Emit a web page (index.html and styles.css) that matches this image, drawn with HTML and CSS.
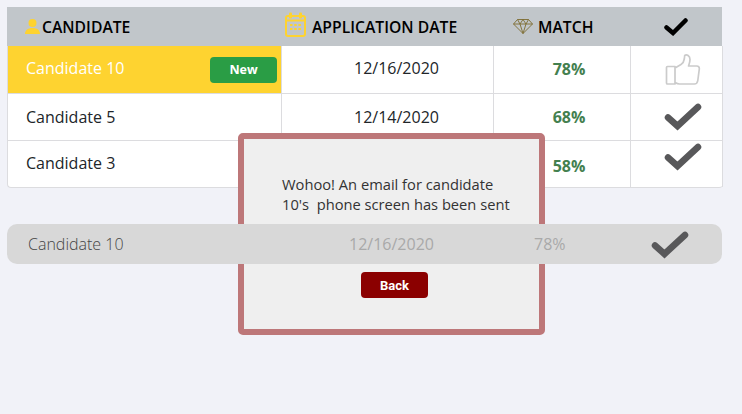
FILE: index.html
```html
<!DOCTYPE html>
<html lang="en">
<head>
<meta charset="utf-8">
<title>Candidates</title>
<link rel="stylesheet" href="styles.css">
</head>
<body>
<main class="page">
  <section class="table">
    <div class="head">
      <div class="hcell h1">
        <svg class="i-user" viewBox="0 0 15 15" width="15" height="15"><circle cx="7.5" cy="4" r="4" fill="#fed330"/><path d="M0 15c0-4 3-6 7.5-6S15 11 15 15z" fill="#fed330"/></svg>
        <span>CANDIDATE</span>
      </div>
      <div class="hcell h2">
        <svg class="i-cal" viewBox="0 0 21 25" width="21" height="25"><rect x="1" y="4" width="19" height="20" rx="2" fill="none" stroke="#fed330" stroke-width="2"/><path d="M1 8.5h19" stroke="#fed330" stroke-width="2"/><rect x="4" y="0.5" width="3" height="6" rx="1" fill="#fed330"/><rect x="14" y="0.5" width="3" height="6" rx="1" fill="#fed330"/><g fill="#fed330"><rect x="5" y="12" width="2.5" height="2"/><rect x="9.2" y="12" width="2.5" height="2"/><rect x="13.4" y="12" width="2.5" height="2"/><rect x="5" y="16" width="2.5" height="2"/><rect x="9.2" y="16" width="2.5" height="2"/><rect x="13.4" y="16" width="2.5" height="2"/></g></svg>
        <span>APPLICATION DATE</span>
      </div>
      <div class="hcell h3">
        <svg class="i-gem" viewBox="0 0 20 15" width="20" height="15"><path d="M4.5.5h11L19.5 5 10 14.500.5 5zM.5 5h19M4.500.5 7 5l3 9.500L13 5 15.500.5M7 5l3-4.500L13 5" fill="none" stroke="#7d6c30" stroke-width=".9"/></svg>
        <span>MATCH</span>
      </div>
      <div class="hcell h4">
        <svg viewBox="0 0 24 18" width="24" height="18"><path d="M2.500 9.500 9 15 21.500 2.500" fill="none" stroke="#000" stroke-width="4.500" stroke-linecap="round" stroke-linejoin="miter"/></svg>
      </div>
    </div>
    <div class="row r1">
      <div class="cell name hilite"><span class="lift">Candidate 10</span><span class="badge">New</span></div>
      <div class="cell date"><span class="lift">12/16/2020</span></div>
      <div class="cell pct"><span class="lift-s">78%</span></div>
      <div class="cell act">
        <svg class="thumb" viewBox="0 0 36 32" width="36" height="32"><path d="M1.500 13.500c0-.6.4-1 1-1H10v17.500H2.500c-.6 0-1-.4-1-1zM10 14l6-3.500c2-1.200 3-3.500 3.300-5.500l.4-3.500c2-1.500 5.300.3 5.300 4 0 2.800-1 5-1.500 6.500h8.300c1.700 0 2.700 1.300 2.500 3l-1.500 11.500c-.3 2-1.500 3.500-3.500 3.500H14.500c-2 0-3.300-.8-4.500-1.500" fill="none" stroke="#cbcbcb" stroke-width="1.700" stroke-linejoin="round"/></svg>
      </div>
    </div>
    <div class="row r2">
      <div class="cell name">Candidate 5</div>
      <div class="cell date">12/14/2020</div>
      <div class="cell pct">68%</div>
      <div class="cell act">
        <svg viewBox="0 0 38 28" width="38" height="28"><path d="M4 14.500 13.500 23 34 4" fill="none" stroke="#58585a" stroke-width="6.500" stroke-linecap="round" stroke-linejoin="miter"/></svg>
      </div>
    </div>
    <div class="row r3">
      <div class="cell name"><span class="lift-s">Candidate 3</span></div>
      <div class="cell date"></div>
      <div class="cell pct low">58%</div>
      <div class="cell act top">
        <svg viewBox="0 0 38 28" width="38" height="28"><path d="M4 14.500 13.500 23 34 4" fill="none" stroke="#58585a" stroke-width="6.500" stroke-linecap="round" stroke-linejoin="miter"/></svg>
      </div>
    </div>
  </section>

  <section class="bar">
    <div class="bname">Candidate 10</div>
    <div class="bdate">12/16/2020</div>
    <div class="bpct">78%</div>
    <div class="bact">
      <svg viewBox="0 0 38 28" width="38" height="28"><path d="M4 14.500 13.500 23 34 4" fill="none" stroke="#58585a" stroke-width="6.500" stroke-linecap="round" stroke-linejoin="miter"/></svg>
    </div>
  </section>

  <aside class="modal">
    <p class="msg">Wohoo! An email for candidate 10's&nbsp; phone screen has been sent</p>
    <button class="back">Back</button>
  </aside>
</main>
</body>
</html>
```
FILE: styles.css
```css
* { box-sizing: border-box; }
html, body { margin: 0; height: 100%; }
body {
  background: #f1f2f8;
  font-family: "Open Sans", sans-serif;
  color: #212529;
  overflow: hidden;
}
.page { position: relative; height: 414px; padding: 7px 20px 0 7px; }

.table { width: 715px; }
.head {
  display: grid;
  grid-template-columns: 275px 212px 137px 91px;
  height: 39px;
  background: #c1c6ca;
  color: #000;
  font-size: 15.7px;
  font-weight: 600;
}
.hcell { display: flex; align-items: center; }
.h1 { padding-left: 18px; }
.h1 svg { margin-right: 2px; margin-top: -1px; }
.h2 { padding-left: 3px; }
.h2 svg { margin-right: 6px; margin-top: -4px; }
.h3 { padding-left: 19px; }
.h3 svg { margin-right: 5px; margin-top: 0; }
.h4 { padding-left: 33px; }

.row {
  display: grid;
  grid-template-columns: 274px 212px 137px 92px;
  width: 716px;
  background: #fff;
  border-left: 1px solid #dcdcdf;
  border-bottom: 1px solid #dcdcdf;
}
.r1 { height: 48px; }
.r2 { height: 47px; }
.r3 { height: 47px; border-radius: 0 0 4px 4px; }

.cell {
  display: flex;
  align-items: center;
  font-size: 16px;
  border-right: 1px solid #dcdcdf;
}
.lift { margin-bottom: 3px; }
.lift-s { margin-bottom: 2px; }
.name { padding-left: 18px; justify-content: space-between; }
.hilite { background: #fed330; color: #fff; padding-right: 4px; }
.badge {
  width: 67px;
  height: 26px;
  background: #2a9d45;
  border-radius: 4px;
  color: #fff;
  font-size: 12.5px;
  font-weight: 700;
  display: flex;
  align-items: center;
  justify-content: center;
}
.date { justify-content: center; padding-left: 18px; }
.pct { color: #44804f; font-weight: 700; justify-content: center; padding-left: 14px; }
.low { padding-top: 4px; }
.act { justify-content: center; padding-left: 12px; }
.top { align-items: flex-start; padding-top: 2px; }

.bar {
  position: relative;
  z-index: 2;
  margin-top: 36px;
  height: 40px;
  width: 715px;
  background: #d8d8d8;
  border-radius: 10px;
  display: grid;
  grid-template-columns: 340px 170px 120px 85px;
  align-items: center;
  font-size: 16px;
  font-weight: 300;
}
.bname { padding-left: 21px; color: #444; opacity: .99; }
.bdate { color: #a9a9a9; font-weight: 400; text-indent: 2px; }
.bpct { color: #a9a9a9; font-weight: 400; padding-left: 17px; }
.bact { display: flex; padding-top: 2px; margin-left: 14px; }
.bact svg { display: block; }

.modal {
  position: absolute;
  left: 238px;
  top: 133px;
  width: 307px;
  height: 202px;
  z-index: 1;
  background: #efefef;
  border: 6px solid #bd7779;
  border-radius: 5px;
  padding: 35px 20px 0 38px;
}
.msg { margin: 0; font-size: 14.7px; line-height: 20px; color: #333; }
.back {
  position: absolute;
  left: 117px;
  top: 133px;
  width: 67px;
  height: 26px;
  border: 0;
  padding: 0;
  border-radius: 4px;
  background: #8b0000;
  color: #fff;
  font-family: Roboto, sans-serif;
  font-size: 13px;
  font-weight: 700;
}
```
